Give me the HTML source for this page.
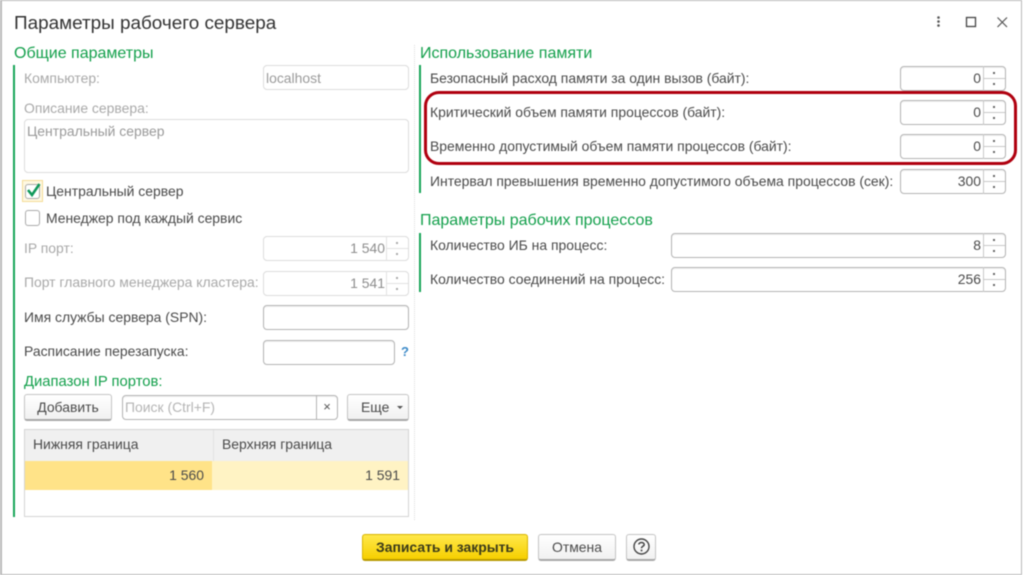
<!DOCTYPE html>
<html lang="ru"><head><meta charset="utf-8"><title>Параметры рабочего сервера</title>
<style>
html,body{margin:0;padding:0;background:#fff}
#p{position:relative;width:1024px;height:575px;overflow:hidden;background:#fff;font-family:"Liberation Sans",sans-serif;font-size:13.93px;color:#4a4a4a;filter:blur(.45px)}
#p div,#p span.a{position:absolute;box-sizing:border-box;white-space:nowrap}
.t{line-height:18px;height:18px}
.g{color:#a9a9a9}
.h{color:#14a04c;font-size:16px;line-height:20px;height:20px}
.f{background:#fff;border:1px solid #b4b4b4;border-radius:4px;height:25px;box-shadow:inset 0 1px 1px #eee}
.d{border-color:#dcdcdc;box-shadow:none}
.v{text-align:right;line-height:23px;padding-right:24px}
.s{top:-1px;right:0;width:22px;height:25px;border-left:1px solid #c8c8c8}
.s:before{content:"";position:absolute;left:0;right:0;top:12px;border-top:1px solid #c8c8c8}
.s:after{content:"";position:absolute;left:9px;top:6px;width:2px;height:2px;background:#666;box-shadow:0 11px 0 #666}
.d .s{border-color:#e2e2e2}.d .s:before{border-color:#e2e2e2}.d .s:after{background:#aaa;box-shadow:0 11px 0 #aaa}
.b{background:linear-gradient(#fff,#f1f1f1);border:1px solid #c4c4c4;border-bottom:2px solid #a8a8a8;border-radius:3px;text-align:center;line-height:24px}
.bar{background:#18a558;width:2px}
</style></head><body><div id="p">
<div style="left:0;top:0;width:1022px;height:575px;border:2px solid #b9b9b9;border-right-width:1px;border-top-width:1px;border-bottom-width:1px"></div>

<div style="left:14px;top:11px;font-size:18.9px;line-height:25px;color:#333">Параметры рабочего сервера</div>
<svg style="position:absolute;left:930px;top:10px" width="84" height="24" viewBox="0 0 84 24">
<circle cx="8.500" cy="7.500" r="1.300" fill="#555"/><circle cx="8.500" cy="11.500" r="1.300" fill="#555"/><circle cx="8.500" cy="15.500" r="1.300" fill="#555"/>
<rect x="36.500" y="7.500" width="9" height="9" fill="none" stroke="#444" stroke-width="1.300"/>
<path d="M67.500 7.500L77 17M77 7.500L67.500 17" fill="none" stroke="#555" stroke-width="1.200"/></svg>

<div style="left:414px;top:45px;height:475px;border-left:1px dotted #ddd"></div>
<div class="bar" style="left:13px;top:65px;height:452px"></div>
<div class="bar" style="left:419px;top:65px;height:128px"></div>
<div class="bar" style="left:419px;top:233px;height:59px"></div>

<div class="h" style="left:14px;top:44px">Общие параметры</div>
<div class="t g" style="left:24px;top:69px">Компьютер:</div>
<div class="f d" style="left:263px;top:65px;width:146px;line-height:24px;padding-left:2px;color:#9a9a9a">localhost</div>
<div class="t g" style="left:24px;top:99px">Описание сервера:</div>
<div class="f d" style="left:24px;top:119px;width:385px;height:54px;line-height:22px;padding-left:2px;color:#9a9a9a">Центральный сервер</div>

<div style="left:22px;top:180px;width:21px;height:22px;background:#fff8e2;border:1px solid #f4dc96"></div>
<div style="left:25px;top:184px;width:15px;height:15px;background:#fff;border:1px solid #aaa;border-radius:3px"></div>
<svg style="position:absolute;left:24px;top:180px" width="20" height="20" viewBox="0 0 20 20"><path d="M4 10L8 15L15.500 4" fill="none" stroke="#10985a" stroke-width="2.600"/></svg>
<div class="t" style="left:46px;top:182px">Центральный сервер</div>
<div style="left:25px;top:210px;width:15px;height:16px;background:#fff;border:1px solid #aaa;border-radius:3px"></div>
<div class="t" style="left:46px;top:209px">Менеджер под каждый сервис</div>

<div class="t g" style="left:24px;top:239px">IP порт:</div>
<div class="f d v g" style="left:263px;top:236px;width:146px;color:#8e8e8e;padding-right:23px">1 540<div class="s"></div></div>
<div class="t g" style="left:24px;top:273px">Порт главного менеджера кластера:</div>
<div class="f d v g" style="left:263px;top:271px;width:146px;color:#8e8e8e;padding-right:23px">1 541<div class="s"></div></div>
<div class="t" style="left:24px;top:308px">Имя службы сервера (SPN):</div>
<div class="f" style="left:263px;top:305px;width:146px"></div>
<div class="t" style="left:24px;top:342px">Расписание перезапуска:</div>
<div class="f" style="left:263px;top:340px;width:132px"></div>
<div class="t" style="left:401px;top:343px;color:#3c8ac8;font-weight:bold;font-size:13px">?</div>
<div class="h" style="left:24px;top:372px;font-size:14.8px">Диапазон IP портов:</div>

<div class="b" style="left:24px;top:394px;width:88px;height:27px">Добавить</div>
<div class="f" style="left:122px;top:395px;width:216px;line-height:23px;padding-left:2px;color:#b5b5b5">Поиск (Ctrl+F)
<div style="left:193px;top:0;height:23px;width:21px;border-left:1px solid #b4b4b4;text-align:center;color:#555;font-size:13px;line-height:22px">×</div></div>
<div class="b" style="left:347px;top:394px;width:62px;height:27px;text-align:left;padding-left:13px">Еще<div style="left:49px;top:11px;width:0;height:0;border:3px solid transparent;border-top-color:#555"></div></div>

<div style="left:24px;top:429px;width:385px;height:88px;border:1px solid #d4d4d4;background:#fff"></div>
<div style="left:25px;top:430px;width:383px;height:31px;background:#f0f0f0"></div>
<div style="left:213px;top:430px;height:31px;border-left:1px solid #e2e2e2"></div>
<div class="t" style="left:33px;top:435px">Нижняя граница</div>
<div class="t" style="left:222px;top:435px">Верхняя граница</div>
<div style="left:25px;top:461px;width:187px;height:29px;background:#ffe388;text-align:right;padding-right:8px;line-height:28px">1 560</div>
<div style="left:212px;top:461px;width:196px;height:29px;background:#fff3c4;text-align:right;padding-right:8px;line-height:28px">1 591</div>

<div class="h" style="left:420px;top:44px">Использование памяти</div>
<div class="t" style="left:430px;top:69px">Безопасный расход памяти за один вызов (байт):</div>
<div class="f v" style="left:900px;top:66px;width:106px">0<div class="s"></div></div>
<div class="t" style="left:430px;top:103px">Критический объем памяти процессов (байт):</div>
<div class="f v" style="left:900px;top:100px;width:106px">0<div class="s"></div></div>
<div class="t" style="left:430px;top:137px">Временно допустимый объем памяти процессов (байт):</div>
<div class="f v" style="left:900px;top:134px;width:106px">0<div class="s"></div></div>
<div class="t" style="left:430px;top:172px">Интервал превышения временно допустимого объема процессов (сек):</div>
<div class="f v" style="left:900px;top:169px;width:106px">300<div class="s"></div></div>
<div style="left:424px;top:91px;width:593px;height:74px;border:3px solid #b0000f;border-radius:15px"></div>

<div class="h" style="left:420px;top:211px">Параметры рабочих процессов</div>
<div class="t" style="left:430px;top:236px">Количество ИБ на процесс:</div>
<div class="f v" style="left:671px;top:233px;width:335px">8<div class="s"></div></div>
<div class="t" style="left:430px;top:270px">Количество соединений на процесс:</div>
<div class="f v" style="left:671px;top:267px;width:335px">256<div class="s"></div></div>

<div style="left:362px;top:534px;width:166px;height:27px;background:linear-gradient(#ffe84a,#f6cf00);border:1px solid #d8b400;border-bottom:2px solid #b89a00;border-radius:3px;text-align:center;font-weight:bold;line-height:24px;color:#3a3a1a">Записать и закрыть</div>
<div class="b" style="left:538px;top:534px;width:78px;height:27px">Отмена</div>
<div class="b" style="left:626px;top:534px;width:30px;height:27px"></div>
<svg style="position:absolute;left:632px;top:537px" width="19" height="19" viewBox="0 0 19 19"><circle cx="9.500" cy="9.500" r="7.500" fill="none" stroke="#444" stroke-width="1.400"/><path d="M6.800 7.500C7 4.800 12 4.800 12.200 7.500C12.300 9.300 9.500 9.300 9.500 11.200" fill="none" stroke="#444" stroke-width="1.500"/><rect x="8.700" y="12.600" width="1.700" height="1.700" fill="#444"/></svg>
</div></body></html>
